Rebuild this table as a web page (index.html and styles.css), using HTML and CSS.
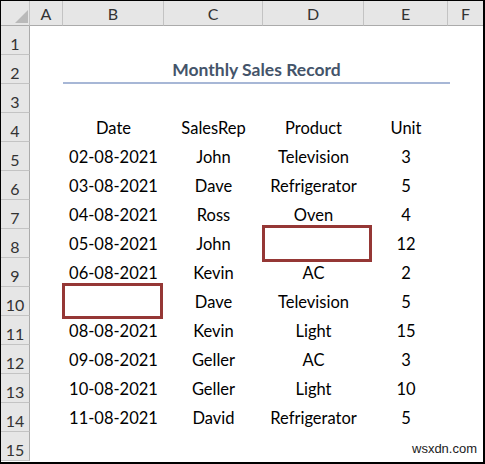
FILE: index.html
```html
<!DOCTYPE html>
<html>
<head>
    <meta charset="utf-8"/>
    <title>Monthly Sales Record</title>
    <link rel="stylesheet" href="styles.css">
</head>
<body>
<div class="sheet">
    <!--列标题-->
    <div class="corner"><span class="cornerMark"></span></div>
    <div class="colHead">A</div>
    <div class="colHead">B</div>
    <div class="colHead">C</div>
    <div class="colHead">D</div>
    <div class="colHead">E</div>
    <div class="colHead last">F</div>

    <div class="rowHead">1</div>
    <div></div><div></div><div></div><div></div><div></div><div></div>

    <div class="rowHead">2</div>
    <div></div>
    <div class="title">Monthly Sales Record</div>
    <div></div>

    <div class="rowHead">3</div>
    <div></div><div></div><div></div><div></div><div></div><div></div>

    <div class="rowHead">4</div>
    <div></div>
    <div class="cell">Date</div>
    <div class="cell">SalesRep</div>
    <div class="cell">Product</div>
    <div class="cell">Unit</div>
    <div></div>

    <div class="rowHead">5</div>
    <div></div>
    <div class="cell">02-08-2021</div>
    <div class="cell">John</div>
    <div class="cell">Television</div>
    <div class="cell">3</div>
    <div></div>

    <div class="rowHead">6</div>
    <div></div>
    <div class="cell">03-08-2021</div>
    <div class="cell">Dave</div>
    <div class="cell">Refrigerator</div>
    <div class="cell">5</div>
    <div></div>

    <div class="rowHead">7</div>
    <div></div>
    <div class="cell">04-08-2021</div>
    <div class="cell">Ross</div>
    <div class="cell">Oven</div>
    <div class="cell">4</div>
    <div></div>

    <div class="rowHead">8</div>
    <div></div>
    <div class="cell">05-08-2021</div>
    <div class="cell">John</div>
    <div class="cell"></div>
    <div class="cell">12</div>
    <div></div>

    <div class="rowHead">9</div>
    <div></div>
    <div class="cell">06-08-2021</div>
    <div class="cell">Kevin</div>
    <div class="cell">AC</div>
    <div class="cell">2</div>
    <div></div>

    <div class="rowHead">10</div>
    <div></div>
    <div class="cell"></div>
    <div class="cell">Dave</div>
    <div class="cell">Television</div>
    <div class="cell">5</div>
    <div></div>

    <div class="rowHead">11</div>
    <div></div>
    <div class="cell">08-08-2021</div>
    <div class="cell">Kevin</div>
    <div class="cell">Light</div>
    <div class="cell">15</div>
    <div></div>

    <div class="rowHead">12</div>
    <div></div>
    <div class="cell">09-08-2021</div>
    <div class="cell">Geller</div>
    <div class="cell">AC</div>
    <div class="cell">3</div>
    <div></div>

    <div class="rowHead">13</div>
    <div></div>
    <div class="cell">10-08-2021</div>
    <div class="cell">Geller</div>
    <div class="cell">Light</div>
    <div class="cell">10</div>
    <div></div>

    <div class="rowHead">14</div>
    <div></div>
    <div class="cell">11-08-2021</div>
    <div class="cell">David</div>
    <div class="cell">Refrigerator</div>
    <div class="cell">5</div>
    <div></div>

    <div class="rowHead">15</div>
    <div></div><div></div><div></div><div></div><div></div><div></div>

    <!--空白单元格标记-->
    <div class="mark markDate"></div>
    <div class="mark markProduct"></div>
    <div class="watermark">wsxdn.com</div>
</div>
</body>
</html>
```

FILE: styles.css
```css
html, body {
    margin: 0;
    padding: 0;
    background: #fff;
}

.sheet {
    position: relative;
    width: 482px;
    height: 461px;
    border-top: 1px solid #000;
    border-left: 1px solid #000;
    border-right: 2px solid #000;
    border-bottom: 2px solid #000;
    display: grid;
    grid-template-columns: 29px 33px 101px 99px 101px 84px 35px;
    grid-template-rows: 25px repeat(15, 29px);
    font-family: Lato, "Liberation Sans", sans-serif;
    font-size: 16.5px;
    color: #000;
    overflow: hidden;
}

.corner {
    position: relative;
    background: #e6e6e6;
    border-right: 1px solid #c3c3c3;
    border-bottom: 1px solid #ababab;
}

.cornerMark {
    position: absolute;
    left: 14px;
    top: 9px;
    width: 13px;
    height: 13px;
    background: #b9b9b9;
    clip-path: polygon(100% 0, 100% 100%, 0 100%);
}

.colHead {
    background: #e6e6e6;
    border-right: 1px solid #c3c3c3;
    border-bottom: 1px solid #ababab;
    text-align: center;
    line-height: 26px;
    font-size: 16px;
    color: #333;
}

.colHead.last {
    border-right: 0;
}

.rowHead {
    background: #e6e6e6;
    border-right: 1px solid #ababab;
    border-bottom: 1px solid #c3c3c3;
    text-align: center;
    line-height: 24px;
    padding-top: 6px;
    font-size: 16px;
    color: #333;
    box-sizing: border-box;
}

.title {
    grid-column: 3 / 7;
    margin-right: -2px;
    text-align: center;
    font-size: 17.5px;
    font-weight: bold;
    color: #44546a;
    line-height: 28px;
    border-bottom: 2px solid #a7b7d6;
    box-sizing: border-box;
    padding-top: 1px;
}

.cell {
    text-align: center;
    line-height: 27px;
    padding-top: 2px;
}

.mark {
    position: absolute;
    border: 3px solid #953735;
    box-sizing: border-box;
}

.markDate {
    left: 61px;
    top: 282px;
    width: 101px;
    height: 36px;
}

.markProduct {
    left: 261px;
    top: 224px;
    width: 110px;
    height: 37px;
}

.watermark {
    position: absolute;
    left: 411px;
    top: 440px;
    font-family: "Liberation Sans", sans-serif;
    font-size: 13px;
    color: #222;
}
```
